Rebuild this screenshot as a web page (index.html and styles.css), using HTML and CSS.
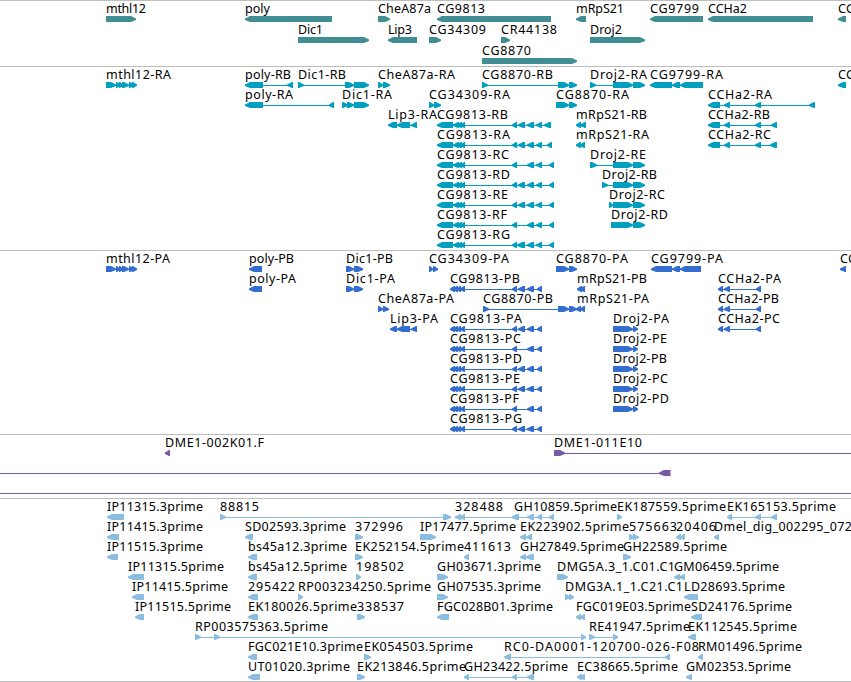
FILE: index.html
```
<!DOCTYPE html>
<html lang="en">
<head>
    <meta charset="UTF-8">
    <meta name="viewport" content="width=device-width, initial-scale=1.0">
    <title>Genome Browser</title>
    <link rel="stylesheet" href="styles.css">
</head>
<body>

<div class="browser">
    <svg class="track genes" id="genes"></svg>
    <svg class="track transcripts" id="transcripts"></svg>
    <svg class="track proteins" id="proteins"></svg>
    <svg class="track bacs" id="bacs"></svg>
    <svg class="track ests" id="ests"></svg>
</div>

<script src="tracks.js"></script>
</body>
</html>
```

FILE: styles.css
```
* {
    margin: 0;
    padding: 0;
    box-sizing: border-box;
}

body {
    background-color: #fff;
    overflow: hidden;
}

.browser {
    display: flex;
    flex-direction: column;
    width: 851px;
    height: 682px;
    border-bottom: 1px solid #bebebe;
}

.track {
    display: block;
    width: 100%;
    border-top: 1px solid #bebebe;
    overflow: hidden;
}

.track text {
    font-family: "Noto Sans", "DejaVu Sans", sans-serif;
    font-size: 12.5px;
    fill: #000;
}

.track rect {
    shape-rendering: crispEdges;
}

.genes {
    height: 66px;
    fill: #408e94;
}

.transcripts {
    height: 184px;
    fill: #009fc0;
}

.proteins {
    height: 184px;
    fill: #326dcf;
}

.bacs {
    height: 64px;
    fill: #775aa8;
}

.ests {
    height: 183px;
    fill: #8abddf;
}
```

FILE: tracks.js
```
const NS = "http://www.w3.org/2000/svg";

const CG_R = "437-453,453-459,457-462,461-465,";
const CG_P = "450-455,453-458,457-461,460-465,";

// row | label | label start | label end | strand | blocks
const tracks = {
    genes: `
0|mthl12|106|146|+|106-136
0|poly|245|270|-|245-332
0|CheA87a|378|431|+|378-390
0|CG9813|437|485|-|437-551
0|mRpS21|576|624|-|576-586
0|CG9799|650|699|-|650-703
0|CCHa2|708|747|-|708-813
0|CG|838|855|-|838-846
1|Dic1|298|323|+|298-369
1|Lip3|388|412|-|388-417
1|CG34309|429|486|+|429-441
1|CR44138|501|557|+|501-510
1|Droj2|590|622|+|590-645
2|CG8870|482|531|+|482-577`,

    transcripts: `
0|mthl12-RA|106|171|+|106-116,116-120,119-123,122-129,129-134,132-137
0|poly-RB|245|291|-|245-263,287-293
0|Dic1-RB|298|346|+|298-304,345-354,354-369
0|CheA87a-RA|378|455|+|378-383,383-390
0|CG8870-RB|482|553|+|482-488,558-569,569-577
0|Droj2-RA|590|647|+|590-596,613-633,633-645
0|CG9799-RA|650|723|-|650-672,672-680,680-703
0|CG|838|855|-|838-846
1|poly-RA|245|293|-|245-263,329-334
1|Dic1-RA|342|392|+|342-348,347-354,354-369
1|CG34309-RA|429|510|+|429-434,434-441
1|CG8870-RA|556|629|+|556-569,569-577
1|CCHa2-RA|708|772|-|708-720,724-730,755-761,809-815
2|Lip3-RA|388|437|-|388-397,397-410,411-417
2|CG9813-RB|437|508|-|${CG_R}512-517,518-525,527-534,536-542,544-551
2|mRpS21-RB|576|647|-|576-581,580-586
2|CCHa2-RB|708|770|-|708-720,724-730,755-761,771-777
3|CG9813-RA|437|510|-|${CG_R}512-517,518-525,527-534,536-542,547-552
3|mRpS21-RA|576|649|-|576-581,580-585
3|CCHa2-RC|708|771|-|708-720,724-730,755-761,770-777
4|CG9813-RC|437|509|-|${CG_R}512-517,527-534,536-542,549-554
4|Droj2-RE|590|646|+|590-597,613-633,633-645
5|CG9813-RD|437|510|-|${CG_R}512-517,518-525,527-534,536-542,549-554
5|Droj2-RB|602|657|+|602-608,613-633,633-645
6|CG9813-RE|437|508|-|${CG_R}512-517,518-525,527-534,536-542,549-554
6|Droj2-RC|609|665|+|609-613,613-633,633-645
7|CG9813-RF|437|507|-|${CG_R}512-517,527-534,536-542,549-554
7|Droj2-RD|611|668|+|611-633,633-645
8|CG9813-RG|437|510|-|${CG_R}512-517,517-525,527-534,536-542,549-554`,

    proteins: `
0|mthl12-PA|106|170|+|106-116,116-120,119-123,122-129,129-134,132-137
0|poly-PB|249|294|-|249-262
0|Dic1-PB|346|393|+|346-354,354-363
0|CG34309-PA|429|509|+|429-433,433-438
0|CG8870-PA|556|628|+|556-569,569-577
0|CG9799-PA|651|723|-|651-672,672-680,680-701
0|CG|840|857|-|840-846
1|poly-PA|249|296|-|249-262
1|Dic1-PA|346|395|+|346-354,354-363
1|CG9813-PB|450|520|-|${CG_P}512-517,518-525,527-534,537-542
1|mRpS21-PB|577|647|-|577-582,580-585
1|CCHa2-PA|718|781|-|718-723,724-730,756-761
2|CheA87a-PA|378|454|+|378-383,383-389
2|CG8870-PB|483|553|+|483-489,558-569,569-577
2|mRpS21-PA|577|649|-|576-581,580-585
2|CCHa2-PB|718|779|-|718-723,724-730,756-761
3|Lip3-PA|390|438|-|390-397,397-410,411-417
3|CG9813-PA|450|522|-|${CG_P}512-517,518-525,527-534,537-542
3|Droj2-PA|613|669|+|613-633,633-638
3|CCHa2-PC|718|780|-|718-723,724-730,756-761
4|CG9813-PC|450|521|-|${CG_P}512-517,527-534,537-542
4|Droj2-PE|613|667|+|613-633,633-638
5|CG9813-PD|450|522|-|${CG_P}512-517,518-525,527-534,537-542
5|Droj2-PB|613|667|+|613-633,633-638
6|CG9813-PE|450|520|-|${CG_P}512-517,518-525,527-534,537-542
6|Droj2-PC|613|668|+|613-633,633-638
7|CG9813-PF|450|519|-|${CG_P}512-517,527-534,537-542
7|Droj2-PD|613|669|+|613-633,633-638
8|CG9813-PG|450|522|-|${CG_P}512-517,518-525,527-534,537-542`,

    bacs: `
0|DME1-002K01.F|165|264|-|165-170
0|DME1-011E10|554|642|+|554-565,900-906
1||0|0|-|-20--10,659-670,671-671
2||0|0|-|-20--10,900-906`,

    ests: `
0|IP11315.3prime|107|203|-|107-124
0|88815|220|259|+|220-226,443-451
0|328488|455|503|-|455-461,460-465,512-519
0|GH10859.5prime|514|617|-|512-519,527-534,537-542,549-554
0|EK187559.5prime|617|726|+|617-622
0|EK165153.5prime|727|836|-|727-732,755-761,771-777
1|IP11415.3prime|107|203|-|107-119
1|SD02593.3prime|245|346|-|245-253
1|372996|355|403|+|355-363
1|IP17477.5prime|420|516|+|420-436
1|EK223902.5prime|520|629|-|520-526,526-532
1|575663|629|677|+|629-634,633-639
1|20406|676|716|-|676-681,680-685
1|Dmel_dig_002295_072|714|852|-|714-719
2|IP11515.3prime|107|203|-|107-118
2|bs45a12.3prime|248|347|-|248-257
2|EK252154.5prime|355|464|+|355-363
2|411613|464|511|-|464-469
2|GH27849.5prime|520|624|-|520-526,526-534
2|GH22589.5prime|623|727|+|623-631
3|IP11315.5prime|128|224|-|128-144
3|bs45a12.5prime|248|347|-|248-257
3|198502|356|404|+|356-361
3|GH03671.3prime|437|541|+|437-448
3|DMG5A.3_1.C01.C1|557|675|+|557-568
3|GM06459.5prime|674|779|-|674-680,679-685
4|IP11415.5prime|132|228|-|132-144
4|295422|248|295|-|248-258
4|RP003234250.5prime|298|431|+|298-303
4|GH07535.3prime|437|541|+|437-448
4|DMG3A.1_1.C21.C1|565|683|+|565-570,569-574
4|LD28693.5prime|684|785|-|684-698
5|IP11515.5prime|135|231|-|135-144
5|EK180026.5prime|248|357|-|248-258
5|338537|357|404|+|357-365
5|FGC028B01.3prime|437|553|-|437-449
5|FGC019E03.5prime|576|691|-|576-581,580-585
5|SD24176.5prime|691|792|-|691-702
6|RP003575363.5prime|195|328|+|195-201,214-220,581-586
6|RE41947.5prime|589|690|+|589-595,613-618
6|EK112545.5prime|688|797|-|688-696
7|FGC021E10.3prime|248|363|-|248-257
7|EK054503.5prime|364|473|+|364-371
7|RC0-DA0001-120700-026-F08|504|699|-|504-511,665-670
7|RM01496.5prime|698|802|-|698-703
8|UT01020.3prime|248|350|-|248-260
8|EK213846.5prime|357|466|+|357-365
8|GH23422.5prime|464|568|-|464-469,512-517,527-534
8|EC38665.5prime|577|678|-|577-582,580-585
8|GM02353.5prime|686|791|-|686-692`
};

function add(parent, tag, attrs) {
    const el = document.createElementNS(NS, tag);
    for (const key in attrs) el.setAttribute(key, attrs[key]);
    parent.appendChild(el);
    return el;
}

// One exon: a bar whose last few pixels taper towards the strand direction
function drawBlock(svg, x1, x2, y, strand) {
    const head = Math.min(x2 - x1, 6);
    const points = strand === "+"
        ? [[x1, y - 3], [x2 - head + 1, y - 3], [x2, y - 0.5], [x2, y + 1], [x2 - head + 1, y + 3], [x1, y + 3]]
        : [[x2, y - 3], [x1 + head - 1, y - 3], [x1, y - 0.5], [x1, y + 1], [x1 + head - 1, y + 3], [x2, y + 3]];
    add(svg, "polygon", { points: points.join(" ") });
}

function drawTrack(id, pitch) {
    const svg = document.getElementById(id);
    tracks[id].trim().split("\n").forEach(line => {
        const [row, label, start, end, strand, spec] = line.split("|");
        const y = 18 + row * pitch;
        const blocks = spec.split(",").map(b => b.match(/(-?\d+)-(-?\d+)/).slice(1).map(Number));

        if (blocks.length > 1) {
            const from = blocks[0][0];
            const to = blocks[blocks.length - 1][1];
            add(svg, "rect", { x: from, y: y, width: to - from, height: 1 });
        }
        blocks.forEach(([x1, x2]) => drawBlock(svg, x1, x2, y, strand));

        if (label) {
            const text = add(svg, "text", { x: start, y: y - 6, textLength: end - start });
            text.textContent = label;
        }
    });
}

drawTrack("genes", 21);
drawTrack("transcripts", 20);
drawTrack("proteins", 20);
drawTrack("bacs", 20);
drawTrack("ests", 20);
```
